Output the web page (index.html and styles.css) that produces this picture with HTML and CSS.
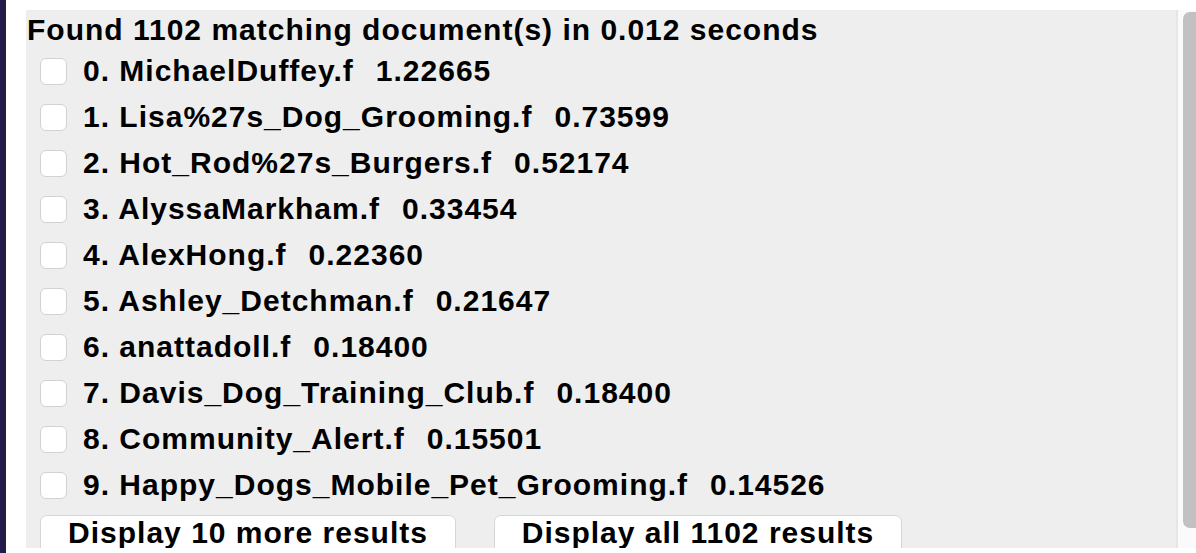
FILE: index.html
```html
<!DOCTYPE html>
<html>
<head>
<meta charset="utf-8">
<link rel="stylesheet" href="styles.css">
</head>
<body>
<div class="frame">
  <div class="stripe"></div>
  <div class="main">
    <div class="panel">
      <div class="content">
        <div class="header">Found 1102 matching document(s) in 0.012 seconds</div>
        <ul class="results">
          <li class="row"><span class="box"></span><span class="label">0. MichaelDuffey.f</span><span class="score">1.22665</span></li>
          <li class="row"><span class="box"></span><span class="label">1. Lisa%27s_Dog_Grooming.f</span><span class="score">0.73599</span></li>
          <li class="row"><span class="box"></span><span class="label">2. Hot_Rod%27s_Burgers.f</span><span class="score">0.52174</span></li>
          <li class="row"><span class="box"></span><span class="label">3. AlyssaMarkham.f</span><span class="score">0.33454</span></li>
          <li class="row"><span class="box"></span><span class="label">4. AlexHong.f</span><span class="score">0.22360</span></li>
          <li class="row"><span class="box"></span><span class="label">5. Ashley_Detchman.f</span><span class="score">0.21647</span></li>
          <li class="row"><span class="box"></span><span class="label">6. anattadoll.f</span><span class="score">0.18400</span></li>
          <li class="row"><span class="box"></span><span class="label">7. Davis_Dog_Training_Club.f</span><span class="score">0.18400</span></li>
          <li class="row"><span class="box"></span><span class="label">8. Community_Alert.f</span><span class="score">0.15501</span></li>
          <li class="row"><span class="box"></span><span class="label">9. Happy_Dogs_Mobile_Pet_Grooming.f</span><span class="score">0.14526</span></li>
        </ul>
        <div class="buttons">
          <button class="btn btn-more">Display 10 more results</button>
          <button class="btn btn-all">Display all 1102 results</button>
        </div>
      </div>
      <div class="scrollbar"><div class="thumb"></div></div>
    </div>
  </div>
</div>
</body>
</html>
```
FILE: styles.css
```css
html, body {
  margin: 0;
  padding: 0;
  background: #ffffff;
  width: 1196px;
  height: 553px;
  overflow: hidden;
}
.frame {
  display: flex;
  height: 553px;
}
.stripe {
  width: 6px;
  flex: none;
  background: #231a4a;
}
.main {
  flex: 1;
  padding: 10px 0 0 20px;
  height: 538px;
}
.panel {
  display: flex;
  height: 538px;
  overflow: hidden;
}
.content {
  width: 1150px;
  flex: none;
  background: #eeeeee;
  font-family: "Liberation Sans", Arial, sans-serif;
  font-weight: bold;
  color: #000;
  overflow: hidden;
}
.header {
  font-size: 30px;
  letter-spacing: 1px;
  line-height: 36px;
  padding: 2px 0 0 1px;
  white-space: nowrap;
}
.results {
  list-style: none;
  margin: 0;
  padding: 0;
}
.row {
  display: flex;
  align-items: center;
  height: 46px;
  padding-left: 14px;
  font-size: 30px;
  letter-spacing: 1px;
  white-space: nowrap;
}
.box {
  width: 27px;
  height: 27px;
  border: 1px solid #d2d2d2;
  border-radius: 6px;
  background: #ffffff;
  flex: none;
  box-sizing: border-box;
}
.label {
  margin-left: 16px;
}
.score {
  margin-left: 22px;
}
.buttons {
  display: flex;
  gap: 38px;
  padding: 7px 0 0 14px;
}
.btn {
  font-family: "Liberation Sans", Arial, sans-serif;
  font-weight: bold;
  font-size: 30px;
  letter-spacing: 1px;
  color: #000;
  background: #ffffff;
  border: 1px solid #d6d6d6;
  border-radius: 7px;
  height: 44px;
  padding: 0;
  line-height: 34px;
  display: flex;
  align-items: flex-start;
  justify-content: center;
}
.btn-more { width: 416px; }
.btn-all { width: 408px; }
.scrollbar {
  flex: none;
  background: #fafafa;
  border-left: 2px solid #e6e6e6;
  padding: 2px 0 0 5px;
  box-sizing: border-box;
  width: 20px;
}
.thumb {
  width: 13px;
  height: 516px;
  background: #c1c1c1;
  border-radius: 7px 0 0 7px;
}
```
